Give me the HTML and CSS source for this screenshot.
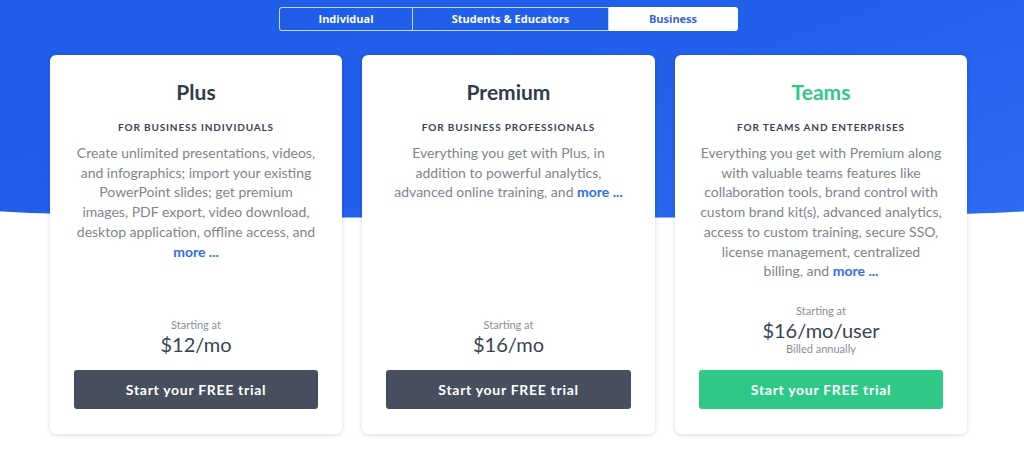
FILE: index.html
```html
<!DOCTYPE html>
<html lang="en">
<head>
<meta charset="utf-8">
<title>Pricing</title>
<link rel="stylesheet" href="styles.css">
</head>
<body>
<div class="page">
  <div class="band"></div>
  <div class="content">
    <nav class="tabs">
      <a class="tab">Individual</a>
      <a class="tab">Students &amp; Educators</a>
      <a class="tab active">Business</a>
    </nav>
    <div class="cards">
      <section class="card">
        <h2 class="title">Plus</h2>
        <div class="subtitle">FOR BUSINESS INDIVIDUALS</div>
        <p class="desc">Create unlimited presentations, videos,<br>and infographics; import your existing<br>PowerPoint slides; get premium<br>images, PDF export, video download,<br>desktop application, offline access, and<br><a class="more">more ...</a></p>
        <div class="price-block">
          <div class="starting">Starting at</div>
          <div class="price">$12/mo</div>
        </div>
        <a class="btn dark">Start your FREE trial</a>
      </section>
      <section class="card">
        <h2 class="title">Premium</h2>
        <div class="subtitle">FOR BUSINESS PROFESSIONALS</div>
        <p class="desc">Everything you get with Plus, in<br>addition to powerful analytics,<br>advanced online training, and <a class="more">more ...</a></p>
        <div class="price-block">
          <div class="starting">Starting at</div>
          <div class="price">$16/mo</div>
        </div>
        <a class="btn dark">Start your FREE trial</a>
      </section>
      <section class="card">
        <h2 class="title green">Teams</h2>
        <div class="subtitle">FOR TEAMS AND ENTERPRISES</div>
        <p class="desc">Everything you get with Premium along<br>with valuable teams features like<br>collaboration tools, brand control with<br>custom brand kit(s), advanced analytics,<br>access to custom training, secure SSO,<br>license management, centralized<br>billing, and <a class="more">more ...</a></p>
        <div class="price-block">
          <div class="starting">Starting at</div>
          <div class="price">$16/mo/user</div>
          <div class="billed">Billed annually</div>
        </div>
        <a class="btn green-btn">Start your FREE trial</a>
      </section>
    </div>
  </div>
</div>
</body>
</html>
```

FILE: styles.css
```css
* { box-sizing: border-box; }
html, body { margin: 0; padding: 0; background: #ffffff; }
body { font-family: Lato, "Open Sans", Arial, sans-serif; }

.page {
  position: relative;
  width: 1024px;
  height: 470px;
  overflow: hidden;
}

.band {
  position: absolute;
  left: -20px;
  top: 0;
  width: 1064px;
  height: 218px;
  background: linear-gradient(160deg, #1f5ce9 0%, #2160eb 55%, #2c6cf4 100%);
  border-radius: 0 0 50% 50% / 0 0 9px 9px;
  z-index: 0;
}

.content {
  position: relative;
  z-index: 1;
  padding: 7px 0 0 50px;
  width: 967px;
}

.tabs {
  display: flex;
  justify-content: center;
  width: 917px;
}
.tabs .tab {
  display: block;
  height: 24px;
  line-height: 22px;
  border: 1px solid rgba(255,255,255,0.75);
  color: #ffffff;
  font-family: "Open Sans", Arial, sans-serif;
  font-weight: 700;
  font-size: 11px;
  text-align: center;
}
.tabs .tab:nth-child(1) { width: 133px; border-radius: 3px 0 0 3px; border-right: none; }
.tabs .tab:nth-child(2) { width: 197px; }
.tabs .tab.active {
  width: 129px;
  background: #ffffff;
  color: #3a62e0;
  border-radius: 0 3px 3px 0;
  border-left: none;
}

.cards {
  margin-top: 24px;
  display: grid;
  grid-template-columns: 292px 293px 292px;
  column-gap: 20px;
  width: 917px;
}

.card {
  background: #ffffff;
  border-radius: 6px;
  box-shadow: 0 1px 4px rgba(30, 40, 60, 0.18);
  height: 379px;
  padding: 25px 16px 25px;
  display: flex;
  flex-direction: column;
  text-align: center;
}

.btn { margin: 0 8px; }

.title {
  margin: 0;
  font-size: 21px;
  line-height: 24px;
  font-weight: 700;
  color: #323b4b;
}
.title.green { color: #2fc987; }

.subtitle {
  margin-top: 16px;
  font-size: 10px;
  line-height: 14px;
  font-weight: 700;
  letter-spacing: 0.85px;
  color: #3b4352;
}

.desc {
  margin: 9px 0 0;
  font-size: 14px;
  line-height: 19.7px;
  color: #7f8490;
  white-space: nowrap;
}
.desc .more {
  color: #2f6cf1;
  font-weight: 700;
}

.price-block {
  margin-top: auto;
  margin-bottom: 14px;
}
.starting {
  font-size: 11px;
  line-height: 14px;
  color: #8a8e98;
}
.price {
  font-size: 20px;
  line-height: 24px;
  color: #3a4353;
}
.billed {
  font-size: 11px;
  line-height: 14px;
  color: #8a8e98;
}

.btn {
  display: block;
  height: 39px;
  line-height: 39px;
  border-radius: 3px;
  color: #ffffff;
  font-size: 14px;
  font-weight: 700;
  letter-spacing: 0.7px;
}
.btn.dark { background: #474f5f; }
.btn.green-btn { background: #2fc987; }
```
